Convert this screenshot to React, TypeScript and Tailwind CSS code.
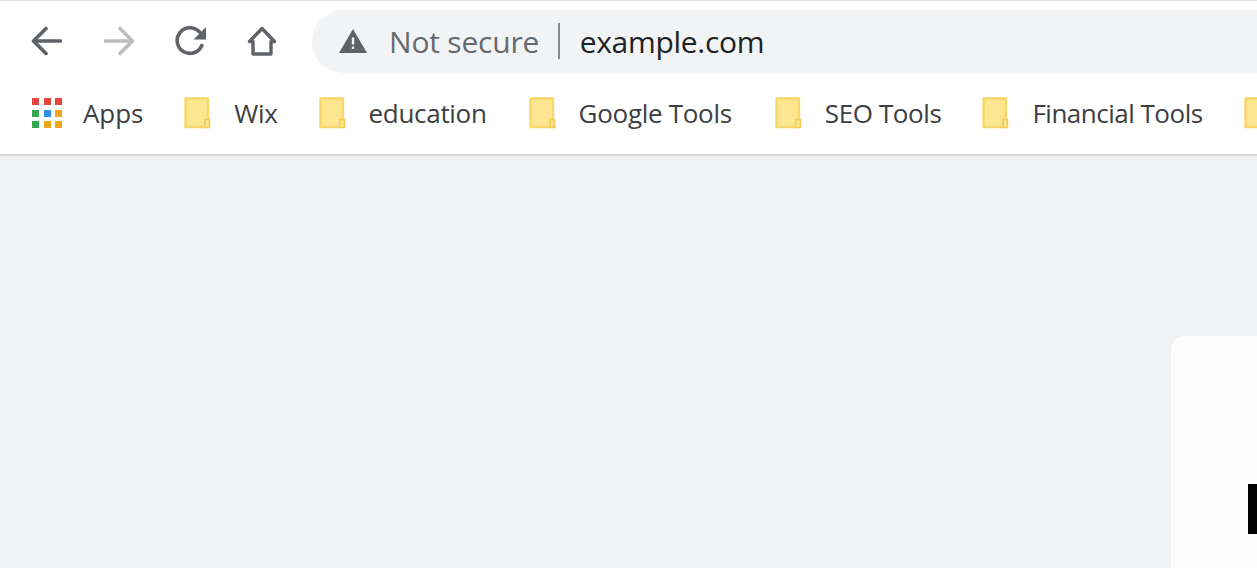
// App.tsx — browser chrome: nav toolbar, bookmarks bar, empty page with a card at the right edge.

const bookmarks = [
  { label: "Wix", cls: "ml-[41px]", text: "" },
  { label: "education", cls: "ml-[41px]", text: "" },
  { label: "Google Tools", cls: "ml-[42px]", text: "" },
  { label: "SEO Tools", cls: "ml-[43px]", text: "tracking-[-0.4px]" },
  { label: "Financial Tools", cls: "ml-[41px]", text: "tracking-[-0.5px]" },
];

function BackIcon({ className }: { className?: string }) {
  return (
    <svg viewBox="0 0 32 30" className={className} fill="none" stroke="currentColor" strokeWidth="3.6" strokeLinecap="round" strokeLinejoin="round">
      <path d="M29.5 15H3M15 2.5 2.5 15 15 27.5" />
    </svg>
  );
}

function ForwardIcon({ className }: { className?: string }) {
  return (
    <svg viewBox="0 0 32 30" className={className} fill="none" stroke="currentColor" strokeWidth="3.6" strokeLinecap="round" strokeLinejoin="round">
      <path d="M2.5 15H29M17 2.5 29.5 15 17 27.5" />
    </svg>
  );
}

function ReloadIcon({ className }: { className?: string }) {
  return (
    <svg viewBox="0 0 32 30" className={className} fill="none">
      <path d="M26.8 19.5A12.8 12.8 0 1 1 24.5 6" stroke="currentColor" strokeWidth="3.6" strokeLinecap="round" />
      <path d="M31 1v12.5H18.5z" fill="currentColor" />
    </svg>
  );
}

function HomeIcon({ className }: { className?: string }) {
  return (
    <svg viewBox="0 0 30 30" className={className} fill="none" stroke="currentColor" strokeWidth="3.4" strokeLinejoin="round">
      <path d="M15 2.5 2.5 15.5h3.5v12.5h18v-12.5h3.5z" />
    </svg>
  );
}

function WarningIcon({ className }: { className?: string }) {
  return (
    <svg viewBox="0 0 28 24" className={className}>
      <path d="M14 0 28 24H0z" fill="currentColor" />
      <path d="M12.8 8.5h2.4v7h-2.4zM12.8 17.5h2.4v2.6h-2.4z" fill="#f1f3f4" />
    </svg>
  );
}

function AppsIcon() {
  const colors = ["bg-[#e8453c]", "bg-[#e8453c]", "bg-[#e8453c]", "bg-[#34a853]", "bg-[#2f8fe8]", "bg-[#f0a818]", "bg-[#34a853]", "bg-[#f0a818]", "bg-[#f0a818]"];
  return (
    <div className="grid grid-cols-[7px_7px_7px] gap-[4.5px] w-[30px] shrink-0">
      {colors.map((c, i) => (
        <span key={i} className={`w-[7px] h-[7px] ${c}`} />
      ))}
    </div>
  );
}

function FolderIcon() {
  return (
    <svg viewBox="0 0 27 32" className="w-[27px] h-[32px] shrink-0">
      <path d="M1.5 1.5h22.5v28.5H1.5z" fill="#fde68f" stroke="#f7d76a" strokeWidth="2.4" strokeLinejoin="round" />
      <path d="M21 22.5h4.5v8H21z" fill="#fde68f" stroke="#f2cb57" strokeWidth="1.6" />
    </svg>
  );
}

export default function App() {
  return (
    <div className="w-[1257px] h-[568px] overflow-hidden flex flex-col bg-[#f0f1f3] font-['Open_Sans','Noto_Sans',sans-serif]">
      <div className="bg-white border-t-[1px] border-[#e2e2e4]">
        {/* toolbar */}
        <div className="flex items-center h-[62px] mt-[9px]">
          <div className="flex items-center pl-[31px] w-[312px] text-[#5f6367]">
            <BackIcon className="w-[32px] h-[30px]" />
            <ForwardIcon className="w-[32px] h-[30px] ml-[40px] text-[#bcbdbf]" />
            <ReloadIcon className="w-[32px] h-[30px] ml-[40px]" />
            <HomeIcon className="w-[30px] h-[30px] ml-[40px]" />
          </div>
          <div className="flex-1 h-[63px] flex items-center rounded-l-[32px] bg-[#f1f3f4] pl-[27px]">
            <WarningIcon className="w-[28px] h-[24px] text-[#5f6367]" />
            <span className="ml-[22px] pt-[2px] text-[30px] leading-none text-[#666a6e] tracking-[-0.2px]">Not secure</span>
            <span className="ml-[19px] w-[1.5px] h-[36px] bg-[#85888c]" />
            <span className="ml-[20px] pt-[2px] text-[30px] leading-none text-[#202225] tracking-[-0.3px]">example.com</span>
          </div>
        </div>
        {/* bookmarks bar */}
        <div className="flex items-center h-[84px] pl-[32px] overflow-hidden whitespace-nowrap text-[26px] tracking-[-0.3px] text-[#3c4043] border-b-2 border-[#d9dadc]">
          <AppsIcon />
          <span className="ml-[21px] tracking-[-0.1px]">Apps</span>
          {bookmarks.map((b) => (
            <div key={b.label} className={`flex items-center ${b.cls}`}>
              <FolderIcon />
              <span className={`ml-[23px] ${b.text}`}>{b.label}</span>
            </div>
          ))}
          <div className="ml-[41px]">
            <FolderIcon />
          </div>
        </div>
      </div>
      {/* page */}
      <div className="flex-1 flex justify-end items-start pt-[180px]">
        <div className="w-[86px] h-[232px] bg-[#fdfdfe] rounded-tl-[14px] pl-[77px] pt-[148px]">
          <div className="w-[9px] h-[50px] bg-black" />
        </div>
      </div>
    </div>
  );
}
